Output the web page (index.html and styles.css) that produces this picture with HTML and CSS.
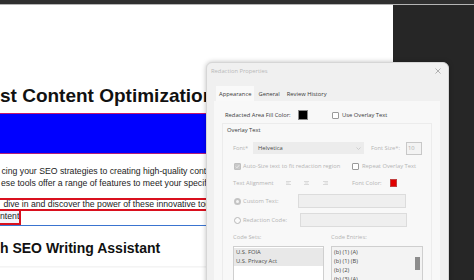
FILE: index.html
```html
<!DOCTYPE html>
<html>
<head>
<meta charset="utf-8">
<link rel="stylesheet" href="styles.css">
</head>
<body>
<div class="topbar"></div>
<div class="main">
  <div class="page">
    <h1 class="h1">st Content Optimization Tools</h1>
    <div class="bluebox"></div>
    <div class="para">
      <div class="line l1">cing your SEO strategies to creating high-quality content, Semrush</div>
      <div class="line l2">ese tools offer a range of features to meet your specific needs.</div>
    </div>
    <div class="redact-wrap">
      <div class="line rbox r1">&nbsp;dive in and discover the power of these innovative tools</div>
      <div class="rrow"><span class="line rbox r2">ntent!</span></div>
    </div>
    <h2 class="h2">h SEO Writing Assistant</h2>
    <div class="rule"></div>
  </div>
  <div class="dark"></div>
</div>

<div class="dialog">
  <div class="dlg-title">
    <span>Redaction Properties</span>
    <svg class="close" width="6" height="6" viewBox="0 0 6 6"><path d="M0.5 0.5L5.5 5.5M5.5 0.5L0.5 5.5" stroke="#a8a8a8" stroke-width="0.9"/></svg>
  </div>
  <div class="tabs">
    <span class="tab active">Appearance</span>
    <span class="tab">General</span>
    <span class="tab">Review History</span>
  </div>
  <div class="panel">
    <div class="row fill-row">
      <span class="fill-label">Redacted Area Fill Color:</span>
      <span class="swatch black"></span>
      <span class="cb"></span>
      <span class="dk">Use Overlay Text</span>
    </div>
    <div class="group">
      <div class="group-label">Overlay Text</div>
      <div class="row font-row">
        <span class="c-font">Font*</span>
        <span class="select">Helvetica
          <svg class="chev" width="5" height="3" viewBox="0 0 5 3"><path d="M0.5 0.5L2.5 2.5L4.5 0.5" stroke="#c4c4c4" stroke-width="0.8" fill="none"/></svg>
        </span>
        <span class="c-size">Font Size*:</span>
        <span class="size-input">10</span>
      </div>
      <div class="row auto-row">
        <span class="c-auto"><span class="cb checked"><svg width="5" height="5" viewBox="0 0 5 5"><path d="M0.8 2.6L2 3.8L4.2 1.2" stroke="#f4f4f4" stroke-width="0.8" fill="none"/></svg></span><span>Auto-Size text to fit redaction region</span></span>
        <span class="cb"></span>
        <span>Repeat Overlay Text</span>
      </div>
      <div class="row align-row">
        <span class="c-align">Text Alignment</span>
        <span class="al a1"><svg width="5" height="4" viewBox="0 0 5 4"><path d="M0 0.5H5M0 2H3.5M0 3.5H5" stroke="#cdcdcd" stroke-width="0.7"/></svg></span>
        <span class="al a2"><svg width="5" height="4" viewBox="0 0 5 4"><path d="M0 0.5H5M0.8 2H4.2M0 3.5H5" stroke="#cdcdcd" stroke-width="0.7"/></svg></span>
        <span class="al a3"><svg width="5" height="4" viewBox="0 0 5 4"><path d="M0 0.5H5M1.5 2H5M0 3.5H5" stroke="#cdcdcd" stroke-width="0.7"/></svg></span>
        <span class="c-fc">Font Color:</span>
        <span class="swatch red"></span>
      </div>
      <div class="row custom-row">
        <span class="c-custom"><span class="radio on"></span><span>Custom Text:</span></span>
        <span class="tinput w108"></span>
      </div>
      <div class="row code-row">
        <span class="c-code"><span class="radio"></span><span>Redaction Code:</span></span>
        <span class="tinput w107"></span>
      </div>
      <div class="row labels-row">
        <span class="c-sets">Code Sets:</span>
        <span>Code Entries:</span>
      </div>
      <div class="row lists-row">
        <div class="list sets">
          <div class="item sel">U.S. FOIA</div>
          <div class="item sel">U.S. Privacy Act</div>
        </div>
        <div class="list entries">
          <div class="item">(b) (1) (A)</div>
          <div class="item">(b) (1) (B)</div>
          <div class="item">(b) (2)</div>
          <div class="item">(b) (3) (A)</div>
          <span class="thumb"></span>
        </div>
      </div>
    </div>
  </div>
</div>
</body>
</html>
```

FILE: styles.css
```css
* { box-sizing: border-box; }
html, body { margin: 0; padding: 0; }
body {
  width: 474px;
  height: 280px;
  overflow: hidden;
  background: #262626;
  position: relative;
  font-family: "Liberation Sans", Arial, sans-serif;
}
.topbar {
  height: 5px;
  background: #2f2f2f;
  border-bottom: 1px solid #b4b4b4;
}
.main {
  display: flex;
  height: 275px;
}
.page {
  width: 393px;
  background: #ffffff;
  overflow: hidden;
  color: #111;
}
.dark { flex: 1; background: #262626; }

.h1 {
  margin: 80px 0 0 0;
  font-size: 19px;
  line-height: 22px;
  font-weight: bold;
  white-space: nowrap;
  color: #111;
}
.bluebox {
  margin-top: 6px;
  height: 41px;
  background: #0000ff;
  border-top: 1px solid #c2186c;
  border-bottom: 1px solid #b0207a;
}
.para { margin-top: 11px; }
.line {
  font-size: 8.7px;
  line-height: 12px;
  white-space: nowrap;
  color: #1c1c1c;
}
.l1 { padding-left: 1.5px; }
.l2 { padding-left: 1px; }
.redact-wrap {
  margin-top: 9px;
  border-bottom: 1px solid #3a74d0;
}
.rbox {
  border: 2px solid #d9101e;
  border-left: none;
  line-height: 9px;
}
.r1 { width: 420px; height: 13px; padding-left: 1px; }
.rrow { display: flex; height: 14px; }
.r2 {
  display: block;
  width: 21px;
  height: 14px;
  border-top: none;
  line-height: 11px;
  background: #f4f4fb;
  overflow: hidden;
}
.h2 {
  margin: 14px 0 0 0;
  font-size: 14px;
  line-height: 17px;
  font-weight: bold;
  white-space: nowrap;
  color: #111;
}
.rule {
  margin-top: 9px;
  height: 2px;
  background: linear-gradient(#f2f2f2, #fafafa);
}

/* dialog */
.dialog {
  position: absolute;
  left: 206px;
  top: 62px;
  width: 243px;
  height: 232px;
  background: #f0f0f0;
  border: 1px solid #d6d6d6;
  border-radius: 6px;
  box-shadow: 0 0 5px rgba(0,0,0,0.25);
  font-family: "Open Sans", "Noto Sans", sans-serif;
  font-size: 5.8px;
  color: #b4b4b4;
}
.dlg-title {
  height: 15px;
  display: flex;
  align-items: center;
  justify-content: space-between;
  padding: 0 7px 0 4px;
  color: #b8b8b8;
}
.tabs {
  display: flex;
  margin-top: 8px;
  padding-left: 9px;
  height: 15px;
}
.tab {
  display: flex;
  align-items: center;
  padding: 0 3px;
  color: #3a3a3a;
}
.tab.active { background: #f9f9f9; margin-right: 1px; }
.tab + .tab { padding-left: 3px; padding-right: 4px; }
.panel {
  margin: 0 8px 0 7px;
  background: #f8f8f8;
  height: 200px;
  padding-top: 9px;
}
.row {
  display: flex;
  align-items: center;
  white-space: nowrap;
}
.dk { color: #3a3a3a; }
.fill-row { height: 10px; padding-left: 11px; color: #3a3a3a; }
.fill-label { width: 73px; }
.swatch {
  display: inline-block;
  border: 1px solid #8a8a8a;
}
.swatch.black { width: 10px; height: 10px; background: #000; margin-right: 24px; }
.swatch.red { width: 7px; height: 8px; background: #e00000; border-color: #c04040; }
.cb {
  display: inline-flex;
  align-items: center;
  justify-content: center;
  width: 7px;
  height: 7px;
  border: 0.8px solid #9a9a9a;
  border-radius: 1px;
  background: #fff;
  margin-right: 3px;
}
.cb.checked { background: #c9c9c9; border-color: #c0c0c0; margin-right: 2px; }

.group {
  margin: 3px 0 0 8px;
  width: 210px;
  border: 1px solid #ececec;
  border-bottom: none;
  height: 170px;
  padding-left: 10px;
}
.group-label {
  height: 12px;
  line-height: 12px;
  margin-left: -6px;
  color: #3a3a3a;
}
.font-row { margin-top: 6px; height: 12px; }
.c-font { width: 20px; }
.select {
  position: relative;
  width: 111px;
  height: 12px;
  background: #ececec;
  color: #4a4a4a;
  display: flex;
  align-items: center;
  padding-left: 5px;
}
.chev { position: absolute; right: 3px; top: 5px; }
.c-size { margin-left: 7px; width: 35px; }
.size-input {
  width: 16px;
  height: 13px;
  border: 1px solid #c8c8c8;
  background: #f3f3f3;
  display: flex;
  align-items: center;
  padding-left: 1px;
  color: #b0b0b0;
}
.auto-row { margin-top: 8px; height: 8px; }
.c-auto { width: 119px; display: flex; align-items: center; padding-left: 1px; }
.align-row { margin-top: 8px; height: 10px; }
.c-align { width: 53px; }
.al { display: inline-flex; width: 5px; }
.a1 { margin-right: 13px; }
.a2 { margin-right: 14px; }
.a3 { margin-right: 24px; }
.c-fc { width: 38px; }
.radio {
  display: inline-block;
  width: 7px;
  height: 7px;
  border-radius: 50%;
  border: 0.8px solid #b8b8b8;
  background: #fafafa;
  margin-right: 2px;
}
.radio.on { border: 2px solid #c4c4c4; background: #f4f4f4; }
.custom-row { margin-top: 6px; height: 14px; }
.c-custom { width: 65px; display: flex; align-items: center; padding-left: 1px; }
.code-row { margin-top: 5px; height: 14px; }
.c-code { width: 67px; display: flex; align-items: center; padding-left: 1px; }
.tinput {
  height: 14px;
  background: #efefef;
  border: 1px solid #dcdcdc;
}
.w108 { width: 108px; }
.w107 { width: 107px; }
.labels-row { margin-top: 6px; height: 8px; }
.c-sets { width: 98px; }
.lists-row { margin-top: 5px; align-items: flex-start; }
.list {
  height: 45px;
  border: 1px solid #cfcfcf;
  padding-top: 1px;
  color: #4a4a4a;
}
.sets { width: 91px; background: #fff; margin-right: 7px; }
.entries { width: 92px; background: #f3f3f3; position: relative; }
.item {
  height: 9px;
  line-height: 9px;
  padding-left: 2px;
}
.item.sel { background: #e8e8e8; }
.thumb {
  position: absolute;
  right: 2px;
  top: 10px;
  width: 5px;
  height: 13px;
  background: #8c8c8c;
}
```
